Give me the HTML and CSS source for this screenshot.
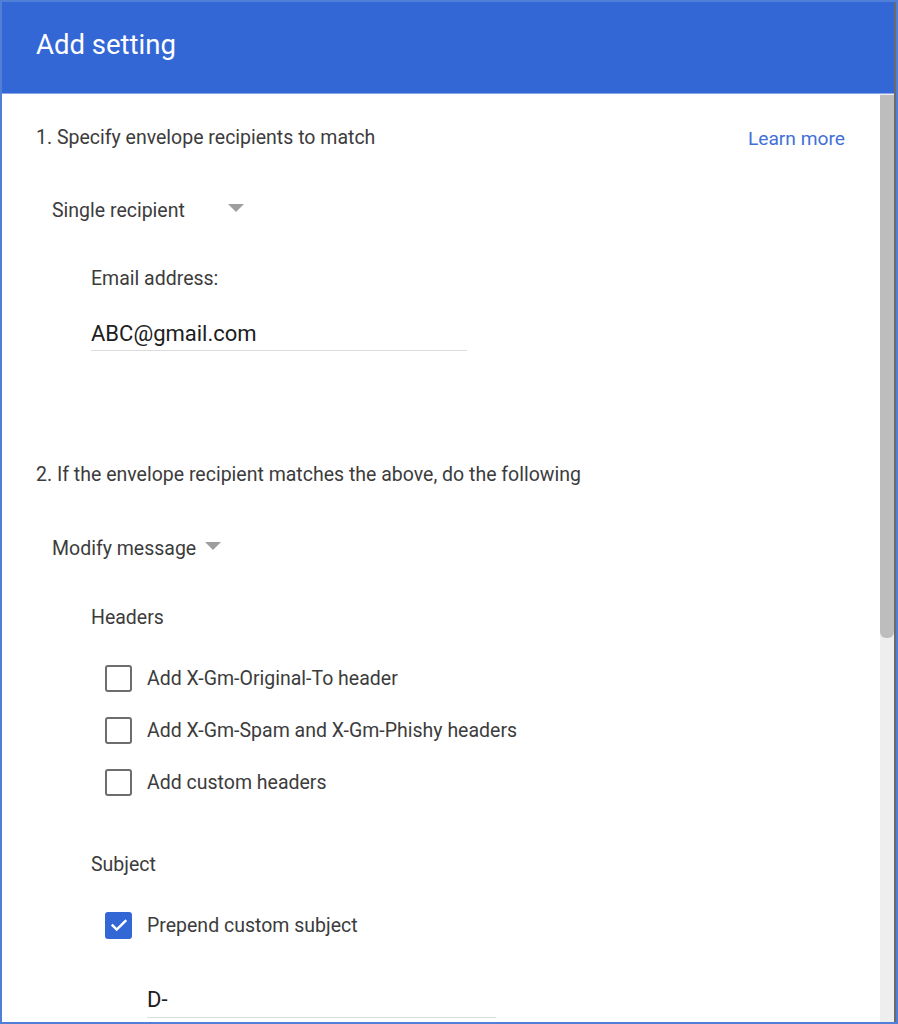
FILE: index.html
```html
<!DOCTYPE html>
<html>
<head>
<meta charset="utf-8">
<link rel="stylesheet" href="styles.css">
</head>
<body>
<div class="frame">
  <div class="window">
    <header class="header">Add setting</header>
    <div class="body">
      <main class="content">
        <div class="step-row">
          <div class="step">1. Specify envelope recipients to match</div>
          <a class="learn">Learn more</a>
        </div>
        <div class="select select-wide"><span class="select-label">Single recipient</span><span class="arrow"></span></div>
        <div class="indent">
          <div class="field-label">Email address:</div>
          <div class="input input-email">ABC@gmail.com</div>
        </div>
        <div class="step step-2">2. If the envelope recipient matches the above, do the following</div>
        <div class="select select-modify"><span class="select-label">Modify message</span><span class="arrow"></span></div>
        <div class="indent">
          <div class="group-label">Headers</div>
          <div class="checks">
            <label class="check"><span class="box"></span><span>Add X-Gm-Original-To header</span></label>
            <label class="check"><span class="box"></span><span>Add X-Gm-Spam and X-Gm-Phishy headers</span></label>
            <label class="check"><span class="box"></span><span>Add custom headers</span></label>
          </div>
          <div class="group-label group-subject">Subject</div>
          <div class="checks checks-subject">
            <label class="check"><span class="box box-on"><svg viewBox="0 0 24 24" width="22" height="22"><path d="M5 12.5l4.5 4.5L19 7.5" fill="none" stroke="#fff" stroke-width="2.6" stroke-linecap="square"/></svg></span><span>Prepend custom subject</span></label>
          </div>
          <div class="input input-subject">D-</div>
        </div>
      </main>
      <div class="scrollbar"><div class="thumb"></div></div>
    </div>
  </div>
</div>
</body>
</html>
```

FILE: styles.css
```css
html, body {
  margin: 0;
  padding: 0;
  background: #fff;
}
.frame {
  width: 898px;
  height: 1024px;
  box-sizing: border-box;
  border: 2px solid #4f7fd6;
  overflow: hidden;
  font-family: Roboto, "Liberation Sans", sans-serif;
}
.window {
  height: 100%;
  border-right: 2px solid #6b6b6b;
  display: flex;
  flex-direction: column;
}
.header {
  flex: none;
  background: #3367d6;
  color: #fff;
  font-size: 27.5px;
  padding-left: 34px;
  line-height: 86px;
  border-bottom: 1px solid #8aa8e8;
  box-sizing: border-box;
  height: 92px;
}
.body {
  flex: 1;
  display: flex;
  min-height: 0;
}
.content {
  flex: 1;
  padding-left: 34px;
  padding-right: 35px;
  color: #3c3c3c;
  font-size: 19.5px;
}
.step-row {
  display: flex;
  justify-content: space-between;
  align-items: center;
  margin-top: 32px;
  height: 24px;
}
.step {
  line-height: 24px;
}
.learn {
  color: #4270d8;
  font-size: 19.2px;
}
.select {
  display: flex;
  align-items: center;
  margin-left: 16px;
  height: 24px;
}
.select-wide {
  margin-top: 48px;
}
.select-wide .select-label {
  width: 176px;
}
.select-modify {
  margin-top: 49px;
}
.select-modify .select-label {
  margin-right: 9px;
}
.arrow {
  width: 0;
  height: 0;
  border-left: 8px solid transparent;
  border-right: 8px solid transparent;
  border-top: 8px solid #9e9e9e;
  margin-top: -4px;
}
.indent {
  margin-left: 55px;
}
.field-label {
  margin-top: 45px;
  line-height: 24px;
}
.input {
  color: #202020;
  font-size: 22px;
  border-bottom: 1px solid #dcdcdc;
  line-height: 28px;
  padding-bottom: 2px;
}
.input-email {
  width: 376px;
  margin-top: 29px;
}
.step-2 {
  margin-top: 112px;
}
.group-label {
  margin-top: 46px;
  line-height: 24px;
}
.checks {
  display: flex;
  flex-direction: column;
  gap: 24px;
  margin-left: 14px;
  margin-top: 34px;
}
.checks-subject {
  margin-top: 34px;
}
.check {
  display: flex;
  align-items: center;
  gap: 15px;
  height: 28px;
}
.box {
  width: 27px;
  height: 27px;
  box-sizing: border-box;
  border: 2.5px solid #6d6d6d;
  border-radius: 3px;
  display: flex;
  align-items: center;
  justify-content: center;
}
.box-on {
  background: #3367d6;
  border-color: #3367d6;
}
.group-subject {
  margin-top: 57px;
}
.input-subject {
  margin-left: 56px;
  width: 349px;
  margin-top: 47px;
  padding-bottom: 3px;
}
.scrollbar {
  width: 14px;
  flex: none;
  background: #eeeeee;
  padding-top: 1px;
}
.thumb {
  height: 543px;
  background: #bdbdbd;
  border-radius: 0 0 6px 6px;
}
```
